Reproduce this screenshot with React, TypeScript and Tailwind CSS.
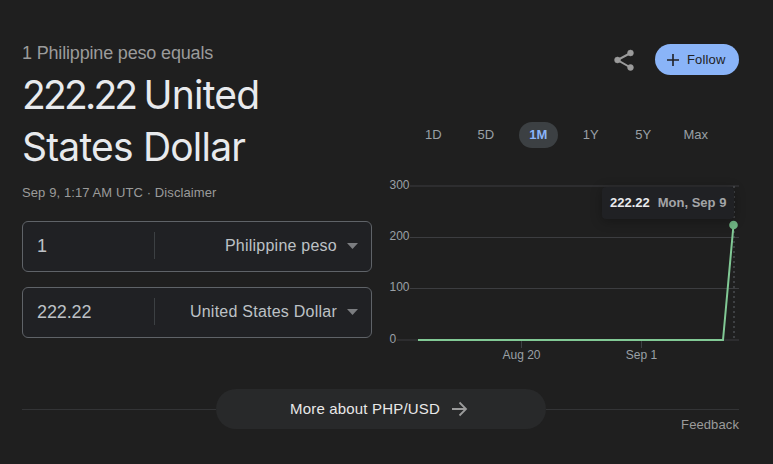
import { useState } from 'react';
import type { ReactNode } from 'react';

const ranges = ['1D', '5D', '1M', '1Y', '5Y', 'Max'];

const yTicks = [
  { label: '300', y: 16 },
  { label: '200', y: 67.5 },
  { label: '100', y: 118.5 },
  { label: '0', y: 170 },
];

const xTicks = [
  { label: 'Aug 20', x: 137.5 },
  { label: 'Sep 1', x: 257.5 },
];

const ShareIcon = () => (
  <svg className="size-6" viewBox="0 0 24 24" fill="#9b9b9b" stroke="#9b9b9b">
    <path d="M18.5 5 5.500 12l13 7.5" fill="none" strokeWidth="2" />
    <circle cx="18.5" cy="5" r="2.9" strokeWidth="0.6" />
    <circle cx="5.5" cy="12" r="2.9" strokeWidth="0.6" />
    <circle cx="18.5" cy="19.5" r="2.9" strokeWidth="0.6" />
  </svg>
);

const Field = ({ value, currency }: { value: string; currency: string }) => (
  <div className="flex h-[51px] items-center rounded-md border border-[#5f6368] bg-[#202124] pb-0.5 pl-3.5 pr-[13px] text-base text-[#bdc1c6]">
    <span className="w-[117px] text-lg tracking-[-0.12px]">{value}</span>
    <span className="h-[27px] w-px bg-[#3c4043]" />
    <button className="flex flex-1 items-center justify-end gap-[10px] tracking-[0.24px]">
      {currency}
      <svg className="h-[6px] w-[11px]" viewBox="0 0 11 6" fill="#7b7d80">
        <path d="M0 0h11L5.5 6z" />
      </svg>
    </button>
  </div>
);

const Muted = ({ children }: { children: ReactNode }) => (
  <span className="text-[13px] tracking-[0.1px] text-[#9b9b9b]">{children}</span>
);

const Chart = () => (
  <div className="relative h-[196px] w-[355px]">
    <svg className="block h-[196px] w-[355px]" viewBox="0 0 355 196" fontFamily="Liberation Sans, Arial, sans-serif" fontSize="12">
      {yTicks.map(tick => (
        <g key={tick.label}>
          <line x1={tick.label === '0' ? 13 : 26} x2="355" y1={tick.y} y2={tick.y} stroke="#3c3d40" />
          <text x="5.5" y={Math.floor(tick.y) + 3} fill="#9aa0a6">{tick.label}</text>
        </g>
      ))}
      {xTicks.map(tick => (
        <g key={tick.label}>
          <line x1={tick.x} x2={tick.x} y1="170" y2="178" stroke="#3c4043" />
          <text x={tick.x} y="189" textAnchor="middle" fill="#9aa0a6">{tick.label}</text>
        </g>
      ))}
      <line x1="350" x2="350" y1="16" y2="170" stroke="#5f6368" strokeDasharray="2 3" />
      <path d="M34 170h305l10.5-115" fill="none" stroke="#81c995" strokeWidth="2" />
      <circle cx="349.5" cy="55" r="4.3" fill="#6fb583" />
    </svg>
    <div className="absolute left-[218px] top-[17px] flex h-8 w-[132px] items-center gap-2 whitespace-nowrap rounded-sm bg-[#202124] pl-[8px] text-[13px] font-bold shadow-[0_2px_12px_rgba(0,0,0,0.3)]">
      <span className="text-[#e8eaed]">222.22</span>
      <span className="text-[#a3a5a8]">Mon, Sep 9</span>
    </div>
  </div>
);

const App = () => {
  const [range, setRange] = useState('1M');

  return (
    <div className="flex h-[464px] w-[773px] flex-col bg-[#1f1f1f] pl-[22px] pr-[34px] font-['Liberation_Sans',Arial,sans-serif]">
      <main className="flex h-[389px] justify-between">
        <section className="w-[350px] pt-[42px]">
          <p className="text-lg leading-[22px] tracking-[-0.17px] text-[#9b9b9b]">1 Philippine peso equals</p>
          <h1 className="mt-[5px] w-[300px] font-['Inter',sans-serif] text-[39px] leading-[52px] tracking-[-0.8px] text-[#e8eaed]">
            <span className="tracking-[-2.8px]">222.22 </span>United<br />States Dollar
          </h1>
          <p className="mt-[9px] leading-5"><Muted>Sep 9, 1:17 AM UTC · Disclaimer</Muted></p>
          <div className="mt-[18px] flex flex-col gap-[15px]">
            <Field value="1" currency="Philippine peso" />
            <Field value="222.22" currency="United States Dollar" />
          </div>
        </section>

        <section className="flex w-[355px] flex-col pt-11">
          <div className="flex h-[31px] items-center justify-end gap-[19px]">
            <button aria-label="Share"><ShareIcon /></button>
            <button className="flex h-[31px] w-[84px] items-center gap-2 rounded-full bg-[#8ab4f8] pl-3 text-[13px] tracking-[0.15px] text-[#202124]">
              <svg className="size-3" viewBox="0 0 12 12" fill="none" stroke="currentColor" strokeWidth="1.6">
                <path d="M6 0v12M0 6h12" />
              </svg>
              Follow
            </button>
          </div>

          <nav className="mt-[47px] flex h-[26px] pl-[30px]">
            {ranges.map(item => (
              <button
                key={item}
                onClick={() => setRange(item)}
                className={`mr-[14px] h-[26px] w-[38.5px] shrink-0 rounded-full text-[13px] ${range === item ? 'bg-[#3c4043] font-bold text-[#8ab4f8]' : 'text-[#9aa0a6]'}`}
              >
                {item}
              </button>
            ))}
          </nav>

          <div className="mt-[22px]"><Chart /></div>
        </section>
      </main>

      <footer>
        <div className="flex h-10 items-center">
          <span className="h-px flex-1 bg-[#333436]" />
          <button className="flex h-10 w-[330px] items-center justify-center gap-3 rounded-full bg-[#28292a] pr-[3px] text-[15px] tracking-[0.18px] text-[#e8e8e8]">
            More about PHP/USD
            <svg className="h-4 w-4" viewBox="0 0 16 16" fill="none" stroke="#9b9b9b" strokeWidth="1.8">
              <path d="M0 8h14M7.5 1.5 14 8l-6.5 6.5" />
            </svg>
          </button>
          <span className="h-px flex-1 bg-[#333436]" />
        </div>
        <p className="-mt-[15px] text-right leading-5"><Muted>Feedback</Muted></p>
      </footer>
    </div>
  );
};

export default App;
